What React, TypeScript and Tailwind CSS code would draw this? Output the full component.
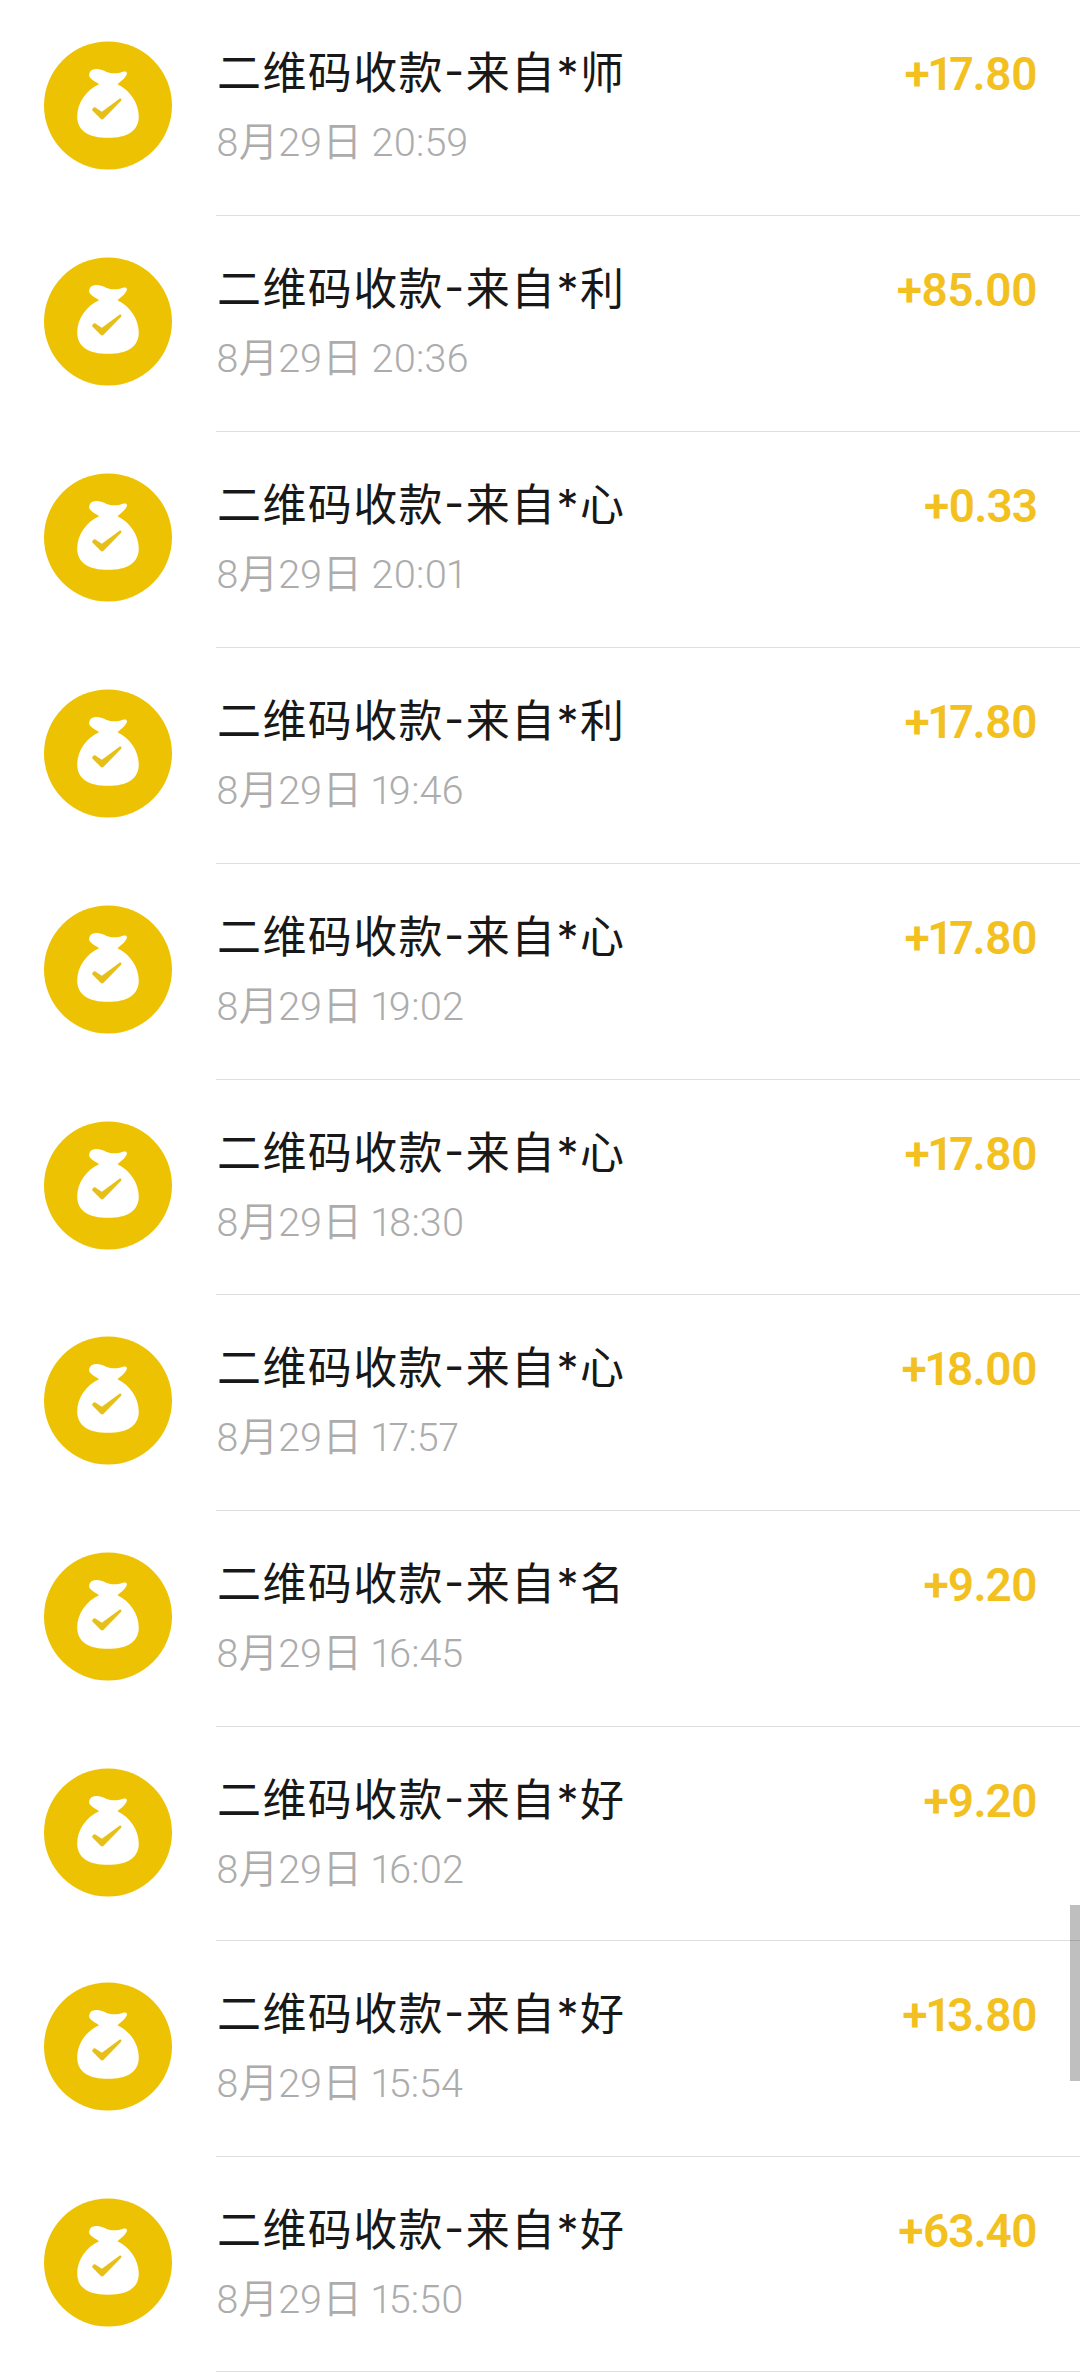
interface Transaction {
  name: string;
  time: string;
  amount: string;
  height: string;
}

const transactions: Transaction[] = [
  { name: '*师', time: '20:59', amount: '+17.80', height: 'h-[216px]' },
  { name: '*利', time: '20:36', amount: '+85.00', height: 'h-[216px]' },
  { name: '*心', time: '20:01', amount: '+0.33', height: 'h-[216px]' },
  { name: '*利', time: '19:46', amount: '+17.80', height: 'h-[216px]' },
  { name: '*心', time: '19:02', amount: '+17.80', height: 'h-[216px]' },
  { name: '*心', time: '18:30', amount: '+17.80', height: 'h-[215px]' },
  { name: '*心', time: '17:57', amount: '+18.00', height: 'h-[216px]' },
  { name: '*名', time: '16:45', amount: '+9.20', height: 'h-[216px]' },
  { name: '*好', time: '16:02', amount: '+9.20', height: 'h-[214px]' },
  { name: '*好', time: '15:54', amount: '+13.80', height: 'h-[216px]' },
  { name: '*好', time: '15:50', amount: '+63.40', height: 'h-[215px]' },
];

function MoneyBagIcon() {
  return (
    <svg viewBox="0 0 130 130" className="h-[129px] w-[130px] shrink-0" aria-hidden="true">
      <circle cx="65" cy="65" r="64.5" fill="#edc202" />
      <path
        d="M47 31C49 27.5 55 27.5 61 30C68 33.5 74 33 80 31C83.5 30 85 31.5 83.5 34.5C81.5 38 78 40.5 74.5 43.5C87 49.5 96 62 96 76C96 91 84 97.5 65 97.5C46 97.5 34 91 34 76C34 62 43 49.5 56 43.5C53.5 41.5 50 40 47.5 37.5C45.5 35.5 45.5 33.5 47 31Z"
        fill="#fff"
      />
      <path
        d="M50 67.4C49 68.4 48.8 69.6 49.8 70.6L57.6 78.4C58.7 79.4 59.7 79.4 60.8 78.2L78 60.4C79.4 58.6 78 57.2 76.2 58.4L58.8 71.4L52.6 67.2C51.7 66.6 50.8 66.6 50 67.4Z"
        fill="#e6bf18"
      />
    </svg>
  );
}

function TransactionRow({ item }: { item: Transaction }) {
  return (
    <li className={`flex pl-[43px] ${item.height}`}>
      <div className="pt-[41px]">
        <MoneyBagIcon />
      </div>
      <div className="ml-[43px] flex flex-1 items-start justify-between border-b border-[#dedede] pr-[43px]">
        <div className="whitespace-nowrap">
          <h3 className="pt-[47px] pl-px font-['Inter','Noto_Sans_CJK_SC',sans-serif] text-[44px] leading-[52px] tracking-[1.4px] text-[#181818]">
            二维码收款<span className="[font-feature-settings:'case']">-</span>来自{item.name}
          </h3>
          <p className="mt-[22px] text-[39.5px] leading-[44px] font-[350] text-[#acacac]">8月29日 {item.time}</p>
        </div>
        <span className="pt-[49px] text-[46px] leading-[50px] font-semibold tracking-[-1px] text-[#f3c11f]">{item.amount}</span>
      </div>
    </li>
  );
}

export default function App() {
  return (
    <main className="relative h-[2380px] w-[1080px] overflow-hidden bg-white font-['Roboto','Noto_Sans_CJK_SC',sans-serif] proportional-nums">
      <ul>
        {transactions.map((item) => (
          <TransactionRow key={item.time} item={item} />
        ))}
      </ul>
      {/* Scrollbar thumb */}
      <div className="absolute top-[1905px] right-0 h-[176px] w-[10px] bg-black/25" />
    </main>
  );
}
